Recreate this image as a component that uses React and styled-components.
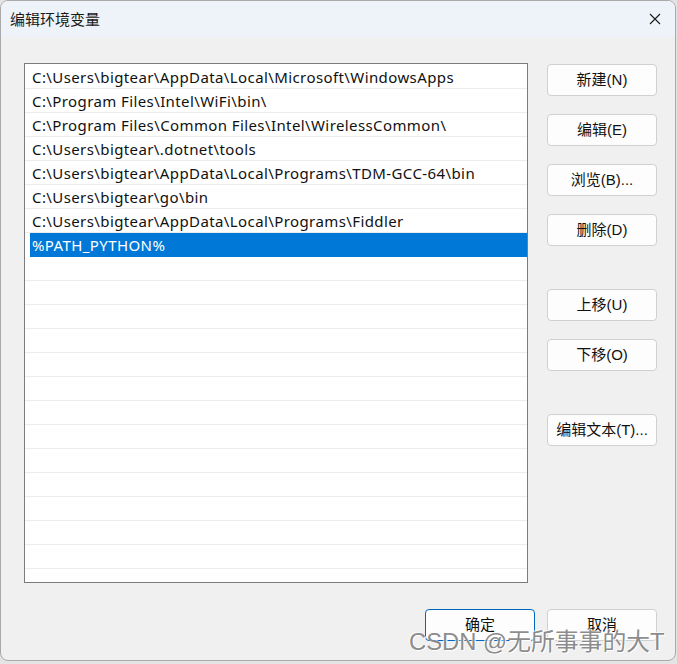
import React from "react";
import styled, { createGlobalStyle } from "styled-components";

const paths = [
  "C:\\Users\\bigtear\\AppData\\Local\\Microsoft\\WindowsApps",
  "C:\\Program Files\\Intel\\WiFi\\bin\\",
  "C:\\Program Files\\Common Files\\Intel\\WirelessCommon\\",
  "C:\\Users\\bigtear\\.dotnet\\tools",
  "C:\\Users\\bigtear\\AppData\\Local\\Programs\\TDM-GCC-64\\bin",
  "C:\\Users\\bigtear\\go\\bin",
  "C:\\Users\\bigtear\\AppData\\Local\\Programs\\Fiddler",
  "%PATH_PYTHON%",
];

const EMPTY_ROWS = 13;
const SELECTED = 7;

const GlobalStyle = createGlobalStyle`
  html, body {
    margin: 0;
    padding: 0;
    background: #e4e4e4;
  }
  body {
    font-family: "Liberation Sans", "Noto Sans CJK SC", sans-serif;
  }
`;

const Page = styled.div`
  width: 677px;
  height: 664px;
  position: relative;
  overflow: hidden;
`;

const Window = styled.div`
  width: 676px;
  height: 661px;
  box-sizing: border-box;
  border: 1px solid #a9a9a9;
  border-radius: 8px;
  overflow: hidden;
  background: #f0f0f0;
  display: flex;
  flex-direction: column;
`;

const TitleBar = styled.div`
  height: 36px;
  flex-shrink: 0;
  background: #eef3f9;
  display: flex;
  align-items: center;
  justify-content: space-between;
  padding: 0 14px 0 9px;
`;

const Title = styled.div`
  font-size: 15px;
  color: #1a1a1a;
  font-family: "Noto Sans CJK SC", sans-serif;
  line-height: 20px;
`;

const CloseIcon = () => (
  <svg width="12" height="12" viewBox="0 0 12 12">
    <path d="M1 1 L11 11 M11 1 L1 11" stroke="#1a1a1a" strokeWidth="1.1" />
  </svg>
);

const Body = styled.div`
  flex: 1;
  display: flex;
  flex-direction: column;
  padding: 26px 18px 0 23px;
`;

const Main = styled.div`
  display: flex;
  align-items: flex-start;
  gap: 19px;
`;

const List = styled.div`
  width: 504px;
  height: 520px;
  box-sizing: border-box;
  border: 1px solid #7a7a7f;
  background: #ffffff;
  padding-top: 1px;
  overflow: hidden;
`;

const Row = styled.div`
  height: 24px;
  box-sizing: border-box;
  border-bottom: 1px solid #ececec;
  display: flex;
  align-items: center;
  padding: 0 0 0 7px;
  font-family: "Noto Sans", "Noto Sans CJK SC", sans-serif;
  font-size: 15px;
  letter-spacing: 0.4px;
  color: #111;
  white-space: nowrap;
`;

const SelectedRow = styled(Row)`
  background: #0078d7;
  color: #ffffff;
  margin-left: 5px;
  padding-left: 2px;
  border-bottom-color: #0078d7;
`;

const Buttons = styled.div`
  display: flex;
  flex-direction: column;
  padding-top: 1px;
`;

const Button = styled.button`
  width: 110px;
  height: 32px;
  box-sizing: border-box;
  border: 1px solid ${(p) => (p.$primary ? "#0067c0" : "#d0d0d0")};
  border-radius: 4px;
  background: #fdfdfd;
  font-family: "Liberation Sans", "Noto Sans CJK SC", sans-serif;
  font-size: 15px;
  color: #111;
  padding: 0;
  margin-top: ${(p) => p.$gap || 0}px;
  line-height: 20px;
`;

const Footer = styled.div`
  display: flex;
  justify-content: flex-end;
  gap: 12px;
  margin-top: 26px;
`;

const Watermark = styled.div`
  position: absolute;
  left: 409px;
  top: 628px;
  font-family: "Liberation Sans", "Noto Sans CJK SC", sans-serif;
  font-size: 23.8px;
  line-height: 28px;
  color: rgba(125, 125, 125, 0.9);
  text-shadow: 1px 1px 0 #ffffff, -1px -1px 0 rgba(255, 255, 255, 0.7);
  white-space: nowrap;
`;

export default function App() {
  return (
    <>
      <GlobalStyle />
      <Page>
        <Window>
          <TitleBar>
            <Title>编辑环境变量</Title>
            <CloseIcon />
          </TitleBar>
          <Body>
            <Main>
              <List>
                {paths.map((p, i) =>
                  i === SELECTED ? (
                    <SelectedRow key={p}>{p}</SelectedRow>
                  ) : (
                    <Row key={p}>{p}</Row>
                  )
                )}
                {Array.from({ length: EMPTY_ROWS }).map((_, i) => (
                  <Row key={"e" + i} />
                ))}
              </List>
              <Buttons>
                <Button>新建(N)</Button>
                <Button $gap={18}>编辑(E)</Button>
                <Button $gap={18}>浏览(B)...</Button>
                <Button $gap={18}>删除(D)</Button>
                <Button $gap={43}>上移(U)</Button>
                <Button $gap={18}>下移(O)</Button>
                <Button $gap={43}>编辑文本(T)...</Button>
              </Buttons>
            </Main>
            <Footer>
              <Button $primary>确定</Button>
              <Button>取消</Button>
            </Footer>
          </Body>
        </Window>
        <Watermark>CSDN @无所事事的大T</Watermark>
      </Page>
    </>
  );
}
